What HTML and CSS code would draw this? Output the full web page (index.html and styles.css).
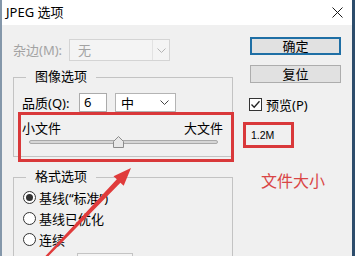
FILE: index.html
```html
<!DOCTYPE html>
<html lang="zh-CN">
<head>
    <meta charset="UTF-8">
    <meta name="viewport" content="width=device-width, initial-scale=1.0">
    <title>JPEG 选项</title>
    <link rel="stylesheet" href="styles.css">
</head>
<body>
    <div class="window">
        <div class="titlebar">
            <span class="title">JPEG 选项</span>
            <svg class="close" width="11" height="11" viewBox="0 0 11 11">
                <path d="M0.5 0.5 L10.5 10.5 M10.5 0.5 L0.5 10.5" stroke="#1a1a1a" stroke-width="1" fill="none"/>
            </svg>
        </div>

        <div class="content">
            <div class="left">
                <div class="matte-row">
                    <span class="matte-label">杂边(M):</span>
                    <div class="combo combo-disabled">
                        <span class="combo-text">无</span>
                        <span class="combo-arrow">
                            <svg width="9" height="5" viewBox="0 0 9 5"><path d="M0.5 0.5 L4.5 4.5 L8.5 0.5" stroke="#b4b4b4" fill="none"/></svg>
                        </span>
                    </div>
                </div>

                <fieldset class="group">
                    <legend>图像选项</legend>
                    <div class="quality-row">
                        <span class="quality-label">品质(Q):</span>
                        <div class="num-input">6</div>
                        <div class="combo combo-quality">
                            <span class="combo-text">中</span>
                            <svg width="9" height="5" viewBox="0 0 9 5"><path d="M0.5 0.5 L4.5 4.5 L8.5 0.5" stroke="#444" fill="none"/></svg>
                        </div>
                    </div>
                    <div class="slider">
                        <div class="slider-labels">
                            <span>小文件</span>
                            <span>大文件</span>
                        </div>
                        <div class="track">
                            <svg class="thumb" width="11" height="12" viewBox="0 0 11 12">
                                <polygon points="5.5,0.5 10.5,5.5 10.5,11.5 0.5,11.5 0.5,5.5" fill="#e8e8e8" stroke="#8c8c8c"/>
                            </svg>
                        </div>
                        <div class="mark mark-slider"></div>
                    </div>
                </fieldset>

                <fieldset class="group group-format">
                    <legend>格式选项</legend>
                    <div class="radio-row"><span class="radio checked"></span>基线(“标准”)</div>
                    <div class="radio-row"><span class="radio"></span>基线已优化</div>
                    <div class="radio-row"><span class="radio"></span>连续</div>
                    <div class="scans-row"><div class="scans-combo"></div></div>
                </fieldset>
            </div>

            <div class="right">
                <button class="btn btn-default">确定</button>
                <button class="btn">复位</button>
                <div class="check-row">
                    <span class="checkbox">
                        <svg width="11" height="11" viewBox="0 0 11 11"><path d="M1.5 5.5 L4.2 8.3 L9.5 2.2" stroke="#222" stroke-width="1.3" fill="none"/></svg>
                    </span>
                    预览(P)
                </div>
                <div class="size-readout">1.2M</div>
                <div class="note">文件大小</div>
            </div>
        </div>

        <!-- annotation arrow pointing at the quality slider -->
        <svg class="arrow" width="355" height="256" viewBox="0 0 355 256">
            <polygon points="40.8,263.9 120.4,182.7 123.7,185.8 131,168 113.5,176.2 116.8,179.3 39.4,262.5" fill="#e03b3b"/>
        </svg>
    </div>
</body>
</html>
```

FILE: styles.css
```css
* {
    margin: 0;
    padding: 0;
    box-sizing: border-box;
}

body {
    width: 355px;
    height: 256px;
    overflow: hidden;
    font-family: "Noto Sans", "Noto Sans CJK SC", sans-serif;
    font-size: 13px;
    color: #000;
    background: #2d4b68;
}

.window {
    position: relative;
    width: 355px;
    height: 256px;
    border-left: 2px solid #8497aa;
    border-right: 3px solid #2d4d6c;
    background: #f0f0f0;
    overflow: hidden;
}

.titlebar {
    height: 25px;
    line-height: 25px;
    background: #fff;
    display: flex;
    align-items: center;
    justify-content: space-between;
    padding: 0 9px 0 4px;
}

.content {
    display: flex;
    padding: 14px 0 0 11px;
}

.left {
    width: 220px;
}

.right {
    width: 91px;
    margin-left: 17px;
    margin-top: -2px;
    display: flex;
    flex-direction: column;
}

/* matte row */
.matte-row {
    display: flex;
    align-items: center;
    height: 22px;
}

.matte-label {
    width: 56px;
    color: #a3a3a3;
    line-height: 16px;
}

.combo {
    display: flex;
    align-items: center;
    border: 1px solid #b4b4b4;
    background: #fff;
    line-height: 16px;
}

.combo-text {
    flex: 1;
}

.combo-disabled {
    width: 101px;
    height: 22px;
    border-color: #d4d4d4;
    background: #f4f4f4;
    color: #a3a3a3;
    padding-left: 8px;
}

.combo-arrow {
    width: 17px;
    height: 100%;
    border-left: 1px solid #e2e2e2;
    display: flex;
    align-items: center;
    justify-content: center;
}

/* group boxes */
.group {
    border: 1px solid #c3c3c3;
    margin-top: 7px;
    padding: 6px 9px 12px 8px;
}

.group legend {
    margin-left: 4px;
    padding: 0 9px 3px 9px;
    line-height: 16px;
}

.group-format {
    margin-top: 11px;
    padding: 0 9px 0 8px;
    height: 100px;
}

.quality-row {
    display: flex;
    align-items: center;
    height: 19px;
}

.quality-label {
    width: 57px;
    line-height: 16px;
}

.num-input {
    width: 28px;
    height: 19px;
    border: 1px solid #ababab;
    background: #fff;
    padding-left: 4px;
    line-height: 17px;
}

.combo-quality {
    width: 61px;
    height: 19px;
    margin-left: 8px;
    padding: 0 6px 0 5px;
}

/* slider */
.slider {
    position: relative;
    padding-top: 8px;
}

.slider-labels {
    display: flex;
    justify-content: space-between;
    line-height: 16px;
}

.track {
    position: relative;
    height: 4px;
    margin: 4px 5px 0 7px;
    border: 1px solid #a9a9a9;
    border-radius: 2px;
    background: #d6d6d6;
}

.thumb {
    position: absolute;
    left: 83px;
    top: -5px;
}

.mark {
    position: absolute;
    border: 3px solid #d9383a;
}

.mark-slider {
    top: 0;
    left: -4px;
    right: -11px;
    bottom: -18px;
}

/* radios */
.radio-row {
    display: flex;
    align-items: center;
    height: 21px;
    line-height: 16px;
}

.radio {
    width: 13px;
    height: 13px;
    margin: 0 3px 0 1px;
    border: 1px solid #333;
    border-radius: 50%;
    background: #fff;
    display: flex;
    align-items: center;
    justify-content: center;
}

.radio.checked::after {
    content: "";
    width: 7px;
    height: 7px;
    border-radius: 50%;
    background: #333;
}

.scans-row {
    margin-top: 3px;
    padding-left: 55px;
}

.scans-combo {
    width: 56px;
    height: 20px;
    border: 1px solid #c4c4c4;
    background: #f4f4f4;
}

/* right column */
.btn {
    height: 18px;
    width: 91px;
    border: 1px solid #adadad;
    background: #e1e1e1;
    font-family: inherit;
    font-size: 13px;
    line-height: 14px;
    color: #000;
}

.btn + .btn {
    margin-top: 10px;
}

.btn-default {
    border: 2px solid #1f6fa5;
}

.check-row {
    display: flex;
    align-items: center;
    height: 17px;
    margin-top: 13px;
    margin-left: -1px;
    line-height: 16px;
}

.checkbox {
    width: 13px;
    height: 13px;
    margin-right: 4px;
    border: 1px solid #333;
    background: #fff;
    display: flex;
    align-items: center;
    justify-content: center;
}

.size-readout {
    width: 51px;
    height: 26px;
    margin: 9px 0 0 -7px;
    padding-left: 5px;
    border: 3px solid #d9383a;
    font-family: "Liberation Sans", sans-serif;
    font-size: 10.5px;
    line-height: 20px;
}

.note {
    margin: 22px 0 0 11px;
    font-family: "Noto Sans CJK SC", sans-serif;
    font-size: 16px;
    line-height: 20px;
    color: #d94545;
    white-space: nowrap;
}

.arrow {
    position: absolute;
    left: -2px;
    top: 0;
    pointer-events: none;
}
```
